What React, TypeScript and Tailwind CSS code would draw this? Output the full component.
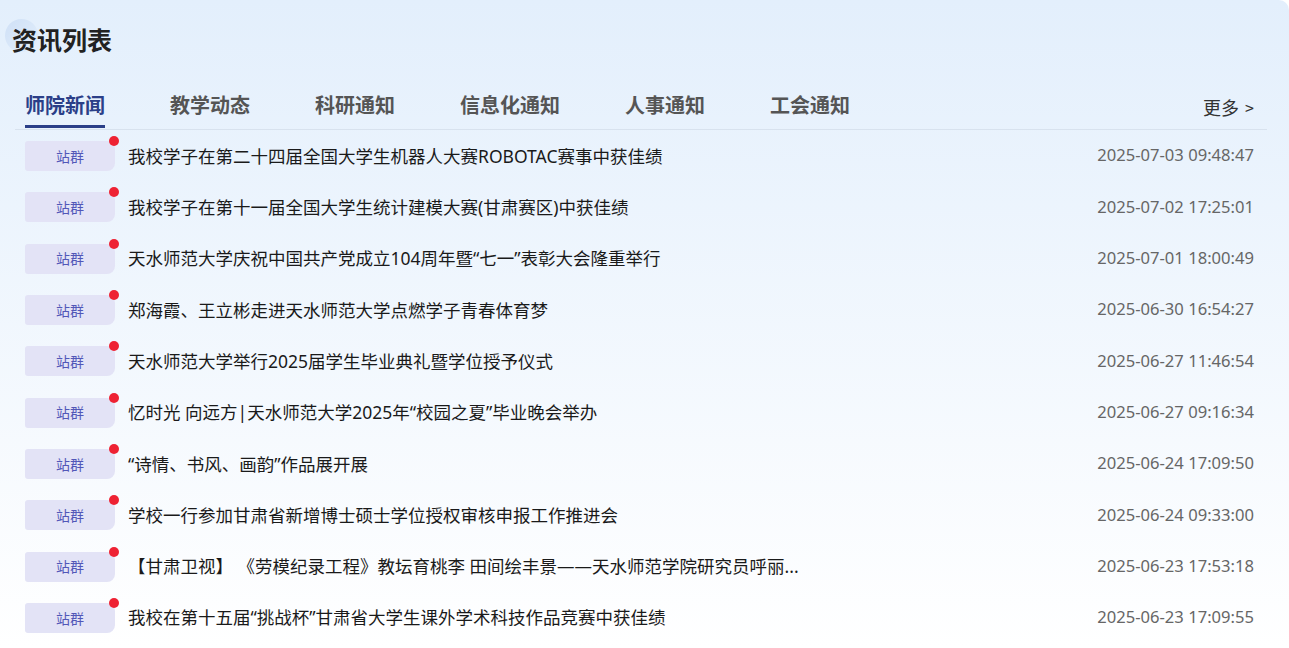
import React from "react";

const tabs = ["师院新闻", "教学动态", "科研通知", "信息化通知", "人事通知", "工会通知"];

const items: [string, string][] = [
  ["我校学子在第二十四届全国大学生机器人大赛ROBOTAC赛事中获佳绩", "2025-07-03 09:48:47"],
  ["我校学子在第十一届全国大学生统计建模大赛(甘肃赛区)中获佳绩", "2025-07-02 17:25:01"],
  ["天水师范大学庆祝中国共产党成立104周年暨“七一”表彰大会隆重举行", "2025-07-01 18:00:49"],
  ["郑海霞、王立彬走进天水师范大学点燃学子青春体育梦", "2025-06-30 16:54:27"],
  ["天水师范大学举行2025届学生毕业典礼暨学位授予仪式", "2025-06-27 11:46:54"],
  ["忆时光 向远方|天水师范大学2025年“校园之夏”毕业晚会举办", "2025-06-27 09:16:34"],
  ["“诗情、书风、画韵”作品展开展", "2025-06-24 17:09:50"],
  ["学校一行参加甘肃省新增博士硕士学位授权审核申报工作推进会", "2025-06-24 09:33:00"],
  ["【甘肃卫视】 《劳模纪录工程》教坛育桃李 田间绘丰景——天水师范学院研究员呼丽...", "2025-06-23 17:53:18"],
  ["我校在第十五届“挑战杯”甘肃省大学生课外学术科技作品竞赛中获佳绩", "2025-06-23 17:09:55"],
];

const cjk = { fontFamily: '"Noto Sans CJK SC", "Noto Sans", sans-serif' };
const mixed = { fontFamily: '"Noto Sans", "Noto Sans CJK SC", sans-serif' };

export default function App() {
  return (
    <div
      className="w-[1289px] h-[648px] overflow-hidden bg-gradient-to-b from-[#e3effc] to-[#ffffff] rounded-tr-[10px]"
      style={cjk}
    >
      <div className="relative pt-[21px] pl-[12px] h-[64px]">
        <div className="absolute left-[5px] top-[19px] w-[33px] h-[33px] rounded-full bg-gradient-to-br from-[#cfe0f6] to-[#e3effc]" />
        <h1 className="relative text-[25px] leading-[36px] font-bold text-[#222]">资讯列表</h1>
      </div>
      <div className="mx-[15px] mr-[22px] border-b border-[#d8e2ee] flex items-end h-[66px] relative">
        <div className="flex gap-[65px] pl-[10px]">
          {tabs.map((t, i) => (
            <div key={t} className="flex flex-col items-start">
              <span
                className={`text-[20px] leading-[28px] font-bold ${i === 0 ? "text-[#2b3f88]" : "text-[#555]"}`}
              >
                {t}
              </span>
              <div className={`mt-[6px] h-[3px] w-full ${i === 0 ? "bg-[#2b3f88]" : "bg-transparent"}`} />
              <div className="h-[1px]" />
            </div>
          ))}
        </div>
        <div className="ml-auto mb-[9px] mr-[13px] text-[18px] leading-[26px] text-[#333] flex items-center gap-[6px]">
          更多 <span className="text-[16px]">&gt;</span>
        </div>
      </div>
      <div className="pl-[25px] pr-[35px]">
        {items.map(([title, date], i) => (
          <div key={i} className="h-[51.33px] flex items-center">
            <div className="relative mt-[1px] w-[90px] h-[30px] shrink-0 bg-[#e3e3f6] rounded-tl-[3px] rounded-bl-[3px] rounded-r-[8px] flex items-center justify-center text-[14px] text-[#5257b8]">
              站群
              <span className="absolute -right-[4px] -top-[5px] w-[10px] h-[10px] rounded-full bg-[#ee2233]" />
            </div>
            <div className="ml-[13px] flex-1 text-[17.5px] text-[#1a1a1a] truncate" style={mixed}>
              {title}
            </div>
            <div
              className="ml-4 text-[16.6px] text-[#666] whitespace-nowrap"
              style={{ fontFamily: '"Noto Sans", sans-serif' }}
            >
              {date}
            </div>
          </div>
        ))}
      </div>
    </div>
  );
}
